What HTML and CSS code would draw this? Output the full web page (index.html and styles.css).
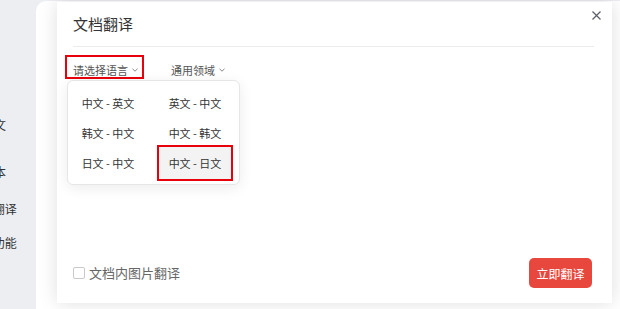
FILE: index.html
```html
<!DOCTYPE html>
<html lang="zh-CN">
<head>
<meta charset="utf-8">
<title>文档翻译</title>
<link rel="stylesheet" href="styles.css">
</head>
<body>
<div class="app">
  <aside class="sidebar">
    <div class="side-item s1">原文</div>
    <div class="side-item s2">文本</div>
    <div class="side-item s3">AI翻译</div>
    <div class="side-item s4">AI功能</div>
  </aside>
  <main class="main">
    <section class="modal">
      <header class="modal-head">
        <h2 class="modal-title">文档翻译</h2>
        <button class="close" aria-label="关闭">
          <svg width="9" height="9" viewBox="0 0 9 9"><path d="M0.5 0.5L8.5 8.5M8.5 0.5L0.5 8.5" stroke="#5a5e6b" stroke-width="1.2" fill="none"/></svg>
        </button>
      </header>
      <div class="toolbar">
        <div class="picker">
          <button class="trigger marked">请选择语言<svg class="chev" width="6" height="4" viewBox="0 0 6 4"><path d="M0.5 0.8L3 3.2L5.5 0.8" stroke="#888" stroke-width="1" fill="none"/></svg></button>
          <div class="menu">
            <div class="menu-item">中文 - 英文</div>
            <div class="menu-item">英文 - 中文</div>
            <div class="menu-item">韩文 - 中文</div>
            <div class="menu-item">中文 - 韩文</div>
            <div class="menu-item">日文 - 中文</div>
            <div class="menu-item active">中文 - 日文</div>
          </div>
        </div>
        <button class="trigger">通用领域<svg class="chev" width="6" height="4" viewBox="0 0 6 4"><path d="M0.5 0.8L3 3.2L5.5 0.8" stroke="#888" stroke-width="1" fill="none"/></svg></button>
      </div>
      <div class="modal-body"></div>
      <footer class="modal-foot">
        <label class="check"><span class="box"></span>文档内图片翻译</label>
        <button class="primary">立即翻译</button>
      </footer>
    </section>
  </main>
</div>
</body>
</html>
```
FILE: styles.css
```css
* { box-sizing: border-box; }
html, body {
  margin: 0;
  padding: 0;
  width: 620px;
  height: 309px;
  overflow: hidden;
  background: #edeef2;
  font-family: "Noto Sans CJK SC", "Microsoft YaHei", sans-serif;
  color: #333;
}
button {
  font-family: inherit;
  background: none;
  border: 0;
  padding: 0;
  cursor: pointer;
}
.app {
  display: flex;
  height: 309px;
}
.sidebar {
  width: 36px;
  flex: none;
  overflow: hidden;
  display: flex;
  flex-direction: column;
  padding-top: 117px;
}
.side-item {
  margin-left: -18px;
  white-space: nowrap;
  font-size: 12px;
  line-height: 16px;
  color: #333;
}
.s2 { margin-top: 31px; }
.s3 { margin-top: 21px; }
.s4 { margin-top: 18px; }

.main {
  flex: 1;
  margin-top: 1px;
  background: #fff;
  border-radius: 10px 0 0 0;
  padding: 1px 8px 6px 21px;
  display: flex;
}
.modal {
  position: relative;
  flex: 1;
  background: #fff;
  box-shadow: 0 0 18px rgba(0, 0, 0, 0.13);
  padding: 0 18px 0 16px;
  display: flex;
  flex-direction: column;
}
.modal-head {
  height: 45px;
  border-bottom: 1px solid #ececec;
}
.modal-title {
  margin: 0;
  font-size: 15px;
  font-weight: 400;
  line-height: 44px;
  color: #333;
}
.close {
  position: absolute;
  top: 9px;
  right: 11px;
  width: 9px;
  height: 9px;
  display: block;
}
.close svg { display: block; }

.toolbar {
  display: flex;
  gap: 19px;
  margin-top: 8px;
  margin-left: -8px;
}
.picker { position: relative; }
.trigger {
  display: inline-flex;
  align-items: center;
  gap: 4px;
  height: 24px;
  border: 2px solid transparent;
  padding: 6px 4px 0 6px;
  font-size: 11px;
  line-height: 14px;
  color: #555;
}
.trigger.marked { border-color: #e8000b; }
.chev { display: block; flex: none; }

.menu {
  position: absolute;
  left: 2px;
  top: 25px;
  width: 173px;
  background: #fff;
  border: 1px solid #e6e6e6;
  border-radius: 6px;
  box-shadow: 0 3px 14px rgba(0, 0, 0, 0.08);
  padding: 7px 9px 6px 5px;
  display: grid;
  grid-template-columns: 70px 70px;
  column-gap: 17px;
  z-index: 2;
}
.menu-item {
  height: 30px;
  line-height: 30px;
  text-align: center;
  font-size: 11px;
  color: #333;
  white-space: nowrap;
}
.menu-item.active {
  background: #f3f3f3;
  box-shadow: 0 0 0 1px #f3f3f3, 0 0 0 3px #e8000b;
}

.modal-body { flex: 1; }
.modal-foot {
  display: flex;
  align-items: center;
  justify-content: space-between;
  margin-right: 2px;
  padding-bottom: 15px;
}
.check {
  display: flex;
  align-items: center;
  gap: 4px;
  font-size: 13px;
  line-height: 16px;
  color: #666;
}
.box {
  width: 12px;
  height: 12px;
  border: 1px solid #c9c9c9;
  border-radius: 2px;
  background: #fff;
}
.primary {
  width: 63px;
  height: 30px;
  border-radius: 5px;
  background: #e8473d;
  color: #fff;
  font-size: 12px;
}
```
